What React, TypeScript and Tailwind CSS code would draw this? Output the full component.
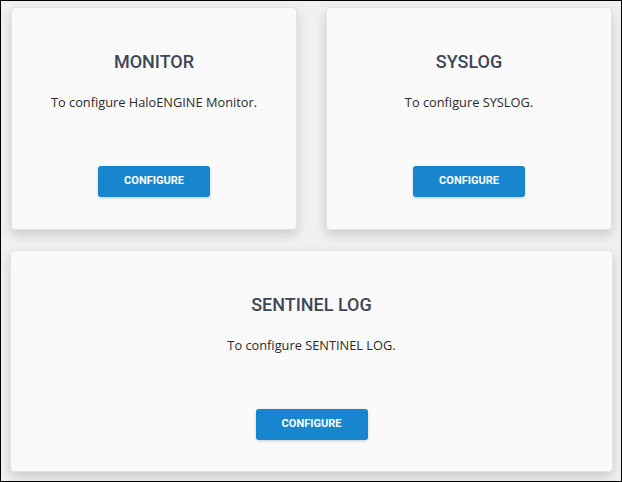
const cards = [
  { title: "MONITOR", text: "To configure HaloENGINE Monitor." },
  { title: "SYSLOG", text: "To configure SYSLOG." },
];

function ConfigCard({ title, text }: { title: string; text: string }) {
  return (
    <div className="flex h-full flex-col items-center rounded-[4px] border border-[#e3e3e3] bg-[#fafafa] shadow-[0_5px_12px_rgba(0,0,0,0.16)]">
      <h2 className="mt-[42px] font-['Roboto',sans-serif] text-[18px] font-medium leading-6 text-[#3d4757]">
        {title}
      </h2>
      <p className="mt-[18px] font-['Open_Sans',sans-serif] text-[12.8px] leading-5 text-[#2b2b2b]">
        {text}
      </p>
      <button className="mt-[54px] h-[31px] w-[112px] rounded-[3px] bg-[#1786cf] font-['Roboto',sans-serif] text-[11px] font-bold text-white shadow-[0_1px_3px_rgba(0,0,0,0.2)]">
        CONFIGURE
      </button>
    </div>
  );
}

export default function App() {
  return (
    <div className="flex h-[482px] w-[622px] flex-col gap-[20px] border border-black bg-[#f1f1f1] pl-[9px] pr-[8px] pt-[6px]">
      <div className="grid h-[223px] grid-cols-2 gap-[29px] px-[1px]">
        {cards.map((c) => (
          <ConfigCard key={c.title} title={c.title} text={c.text} />
        ))}
      </div>
      <div className="h-[222px]">
        <ConfigCard title="SENTINEL LOG" text="To configure SENTINEL LOG." />
      </div>
    </div>
  );
}
